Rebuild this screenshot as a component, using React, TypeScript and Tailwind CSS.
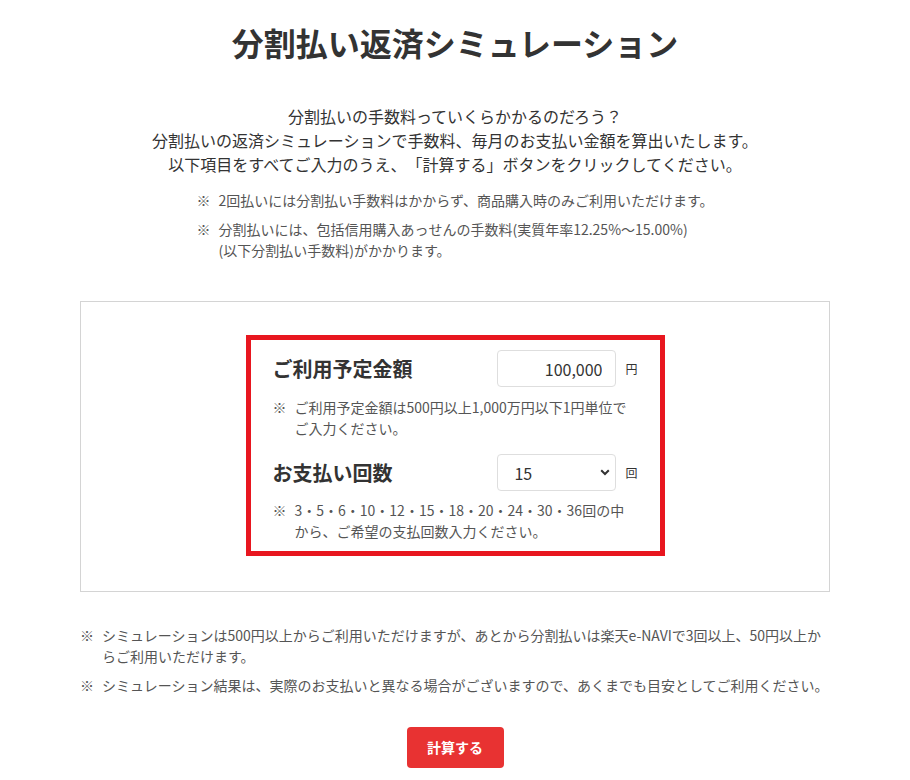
import React from "react";

const counts = [3, 5, 6, 10, 12, 15, 18, 20, 24, 30, 36];

const Note = ({ children }: { children: React.ReactNode }) => (
	<p className="flex text-[14px] leading-[21px] text-[#555]">
		<span className="w-[22px] shrink-0">※</span>
		<span>{children}</span>
	</p>
);

const App = () => {
	return (
		<div
			className="min-h-[780px] bg-white text-[#333] pt-[18px] [text-spacing-trim:space-all]"
			style={{ fontFamily: '"Noto Sans CJK JP", "Noto Sans", sans-serif' }}
		>
			<h1 className="text-center text-[32px] leading-[48px] font-bold">
				分割払い返済シミュレーション
			</h1>

			<div className="mt-[38px] text-center text-[16px] leading-[24px]">
				<p>分割払いの手数料っていくらかかるのだろう？</p>
				<p>分割払いの返済シミュレーションで手数料、毎月のお支払い金額を算出いたします。</p>
				<p>以下項目をすべてご入力のうえ、「計算する」ボタンをクリックしてください。</p>
			</div>

			<div className="mt-[14px] flex justify-center">
				<div className="flex flex-col gap-2">
					<Note>2回払いには分割払い手数料はかからず、商品購入時のみご利用いただけます。</Note>
					<Note>
						分割払いには、包括信用購入あっせんの手数料(実質年率12.25%～15.00%)
						<br />
						(以下分割払い手数料)がかかります。
					</Note>
				</div>
			</div>

			<div className="mx-auto mt-[40px] w-[750px]">
				<div className="flex justify-center border border-[#d4d4d4] pt-[33px] pb-[35px]">
					<div className="w-[419px] border-[5px] border-[#e8161f] px-[22px] pt-[10px] pb-[9px]">
						<div className="flex items-center justify-between">
							<span className="text-[20px] font-bold">ご利用予定金額</span>
							<div className="flex items-center">
								<input
									type="text"
									defaultValue="100,000"
									className="h-[37px] w-[119px] rounded border border-[#dedede] pr-[13px] text-right text-[16px] text-[#333] outline-none"
								/>
								<span className="ml-[9px] text-[12px]">円</span>
							</div>
						</div>
						<div className="mt-[10px]">
							<Note>
								ご利用予定金額は500円以上1,000万円以下1円単位で
								<br />
								ご入力ください。
							</Note>
						</div>

						<div className="mt-[15px] flex items-center justify-between">
							<span className="text-[20px] font-bold">お支払い回数</span>
							<div className="flex items-center">
								<div className="relative">
									<select
										defaultValue="15"
										className="h-[37px] w-[119px] appearance-none rounded border border-[#dedede] bg-white pl-[16px] text-[16px] text-[#333] outline-none"
									>
										{counts.map((c) => (
											<option key={c} value={c}>
												{c}
											</option>
										))}
									</select>
									<svg
										className="pointer-events-none absolute right-[6px] top-[15px]"
										width="10"
										height="7"
										viewBox="0 0 10 7"
									>
										<path d="M1.2 1.2 L5 5 L8.8 1.2" fill="none" stroke="#333" strokeWidth="2" />
									</svg>
								</div>
								<span className="ml-[9px] text-[12px]">回</span>
							</div>
						</div>
						<div className="mt-[9px]">
							<Note>
								3・5・6・10・12・15・18・20・24・30・36回の中
								<br />
								から、ご希望の支払回数入力ください。
							</Note>
						</div>
					</div>
				</div>

				<div className="mt-[33px] flex flex-col gap-2">
					<Note>
						シミュレーションは500円以上からご利用いただけますが、あとから分割払いは楽天e-NAVIで3回以上、50円以上か
						<br />
						らご利用いただけます。
					</Note>
					<Note>
						シミュレーション結果は、実際のお支払いと異なる場合がございますので、あくまでも目安としてご利用ください。
					</Note>
				</div>

				<div className="mt-[31px] flex justify-center">
					<button className="h-[41px] w-[97px] rounded bg-[#e83232] text-[14px] font-bold text-white">
						計算する
					</button>
				</div>
			</div>
		</div>
	);
};

export default App;
